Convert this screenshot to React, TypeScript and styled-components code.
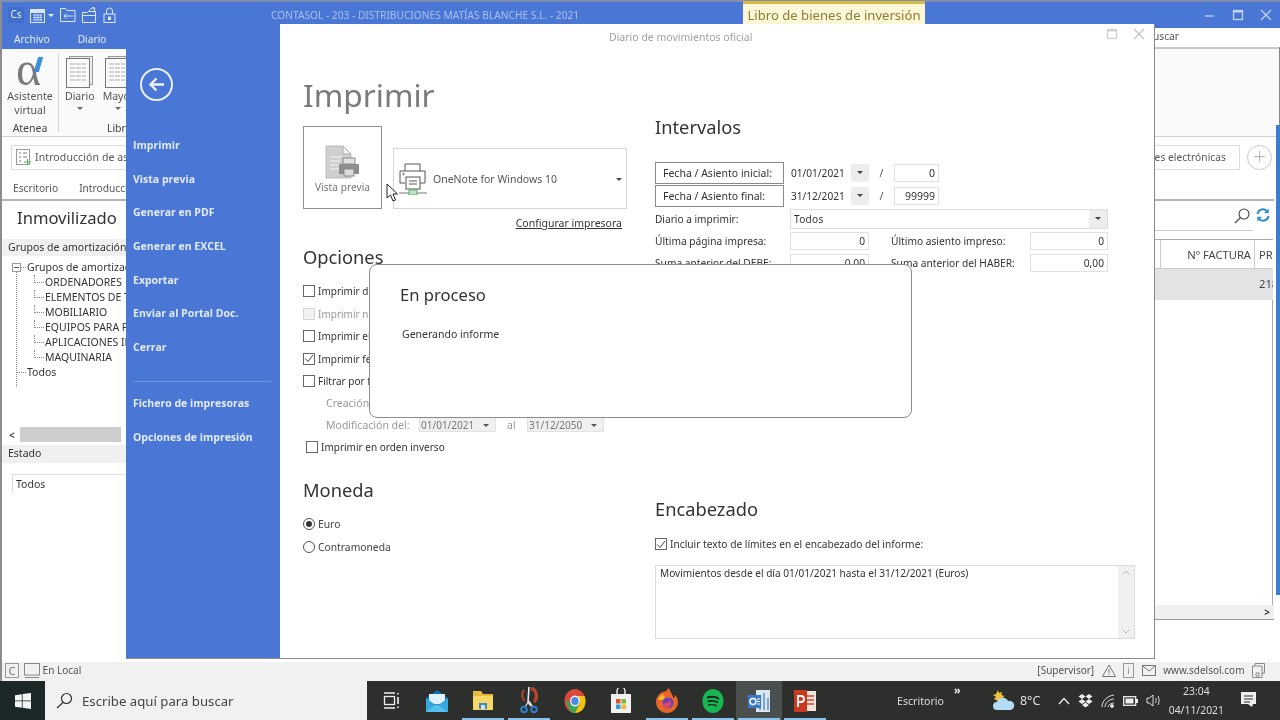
import React from 'react'
import styled, { createGlobalStyle } from 'styled-components'

const BLUE = '#4a76d6'
const FONT = '"Noto Sans", "Open Sans", sans-serif'

const GlobalStyle = createGlobalStyle`
  html, body { margin: 0; padding: 0; background: #fff; }
  body { font-family: ${FONT}; color: #333; }
  * { box-sizing: border-box; }
`

const Screen = styled.div`
  position: relative;
  width: 1280px;
  height: 720px;
  overflow: hidden;
  display: flex;
  flex-direction: column;
  font-size: 10.5px;
  filter: blur(0.35px);
`

/* background application window */
const AppWindow = styled.div`
  height: 681px;
  display: flex;
  flex-direction: column;
  border-left: 2px solid #8d8d8d;
  border-top: 2px solid #7f8fb0;
  background: #fff;
`

const TitleBar = styled.div`
  height: 26px;
  flex: none;
  background: ${BLUE};
  display: flex;
  align-items: center;
  padding-left: 6px;
  color: #fff;
`

const QuickIcons = styled.div`
  display: flex;
  align-items: center;
  gap: 6px;
  width: 263px;
`

const WhiteCaret = styled.div`
  width: 0;
  height: 0;
  margin-left: -4px;
  border-left: 3px solid transparent;
  border-right: 3px solid transparent;
  border-top: 3px solid #e6edfb;
`

const AppTitle = styled.div`
  width: 472px;
  color: #a9c0ee;
  font-size: 10.2px;
  white-space: nowrap;
`

const ContextTab = styled.div`
  width: 182px;
  height: 26px;
  margin-top: -2px;
  border-top: 3px solid #d8bb45;
  background: #fcf7d6;
  color: #8b7c36;
  font-size: 13.1px;
  text-align: center;
  line-height: 22px;
  white-space: nowrap;
`

const WindowControls = styled.div`
  margin-left: auto;
  display: flex;
  align-items: center;
  gap: 12px;
  padding-right: 6px;
`

const TabRow = styled.div`
  height: 21px;
  flex: none;
  display: flex;
  border-bottom: 2px solid #c8c8c8;
`

const BlueTabs = styled.div`
  width: 124px;
  background: ${BLUE};
  display: flex;
  color: #e6edfb;
  margin-bottom: -2px;
  font-size: 10.2px;
  line-height: 22px;
  gap: 28px;
  padding-left: 12px;
`

const SearchHint = styled.div`
  margin-left: auto;
  width: 126px;
  text-indent: -1px;
  font-size: 10.2px;
  line-height: 16px;
  color: #555;
`

const Ribbon = styled.div`
  height: 88px;
  flex: none;
  display: flex;
  background: #fafafa;
  border-bottom: 1px solid #d0d0d0;
`

const RibbonGroup = styled.div<{ $width: number }>`
  width: ${(p) => p.$width}px;
  flex: none;
  padding-top: 7px;
  display: flex;
  flex-direction: column;
  align-items: center;
  text-align: center;
  line-height: 14px;
  color: #555;
`

const RibbonIcons = styled.div`
  display: flex;
  gap: 8px;
  align-self: flex-start;
  padding-left: 6px;
`

const RibbonTool = styled.div`
  display: flex;
  flex-direction: column;
  align-items: center;
  line-height: 14px;
  color: #555;
  white-space: nowrap;
  gap: 1px;
`

const GroupLabel = styled.div`
  margin-top: auto;
  padding-bottom: 1px;
  color: #444;
  white-space: nowrap;
`

const RibbonDivider = styled.div`
  width: 1px;
  height: 78px;
  margin: 5px 0 0 0;
  background: #d4d4d4;
`

const Alpha = styled.div`
  position: relative;
  height: 33px;
  font-family: 'Liberation Serif', serif;
  font-size: 48px;
  line-height: 26px;
  margin-left: -3px;
  color: #7a7a7a;
  &::after {
    content: '';
    position: absolute;
    left: 20px;
    top: 1px;
    width: 5px;
    height: 15px;
    background: #3d8fd9;
    transform: skewX(-16deg);
  }
`

const Caret = styled.div`
  width: 0;
  height: 0;
  border-left: 3px solid transparent;
  border-right: 3px solid transparent;
  border-top: 3px solid #666;
  margin: 3px auto 0;
`

const QuickBar = styled.div`
  height: 40px;
  flex: none;
  padding: 8px 8px 0 9px;
  display: flex;
  align-items: flex-start;
`

const QuickBox = styled.div`
  height: 25px;
  border: 1px solid #dcdcdc;
  width: 200px;
  display: flex;
  align-items: center;
  padding: 0 0 1px 4px;
  gap: 3px;
  color: #555;
  letter-spacing: 0.1px;
  white-space: nowrap;
  overflow: hidden;
  flex: none;
`

const QuickBoxRight = styled(QuickBox)`
  margin-left: auto;
  width: 140px;
  justify-content: flex-end;
  padding-right: 13px;
  font-size: 10.1px;
`

const PlusCircle = styled.div`
  width: 25px;
  height: 25px;
  margin-left: 7px;
  border-radius: 50%;
  border: 1px solid #c9c9c9;
  color: #bbb;
  font-size: 23px;
  line-height: 20px;
  font-weight: 300;
  text-align: center;
  flex: none;
`

const SubTabs = styled.div`
  height: 24px;
  flex: none;
  display: flex;
  gap: 21px;
  padding-left: 11px;
  font-size: 10.2px;
  line-height: 22px;
  color: #555;
  border-bottom: 2px solid #b5b5b5;
  margin-right: 6px;
`

const Workspace = styled.div`
  flex: 1;
  display: flex;
  min-height: 0;
`

const LeftPane = styled.div`
  width: 124px;
  display: flex;
  flex-direction: column;
  overflow: hidden;
  flex: none;
`

const PaneTitle = styled.div`
  height: 38px;
  padding: 2px 0 0 15px;
  font-size: 16.6px;
  line-height: 30px;
  color: #333;
  white-space: nowrap;
`

const GrayHeader = styled.div<{ $height?: number }>`
  height: ${(p) => p.$height ?? 17}px;
  flex: none;
  background: #f0f0f0;
  padding-left: 6px;
  line-height: 16px;
  color: #333;
  white-space: nowrap;
`

const Tree = styled.div`
  position: relative;
  height: 171px;
  padding-top: 4px;
  &::before {
    content: '';
    position: absolute;
    left: 14px;
    top: 16px;
    height: 115px;
    border-left: 1px dotted #888;
  }
`

const TreeRow = styled.div<{ $depth: number }>`
  position: relative;
  height: 15px;
  line-height: 15px;
  padding-left: ${(p) => (p.$depth ? 43 : 25)}px;
  color: #333;
  white-space: nowrap;
  &::before {
    content: '';
    position: absolute;
    top: 7px;
    left: ${(p) => (p.$depth ? 32 : 15)}px;
    width: ${(p) => (p.$depth ? 10 : 9)}px;
    border-top: 1px dotted #888;
  }
  &::after {
    content: '';
    display: ${(p) => (p.$depth ? 'block' : 'none')};
    position: absolute;
    top: 0;
    left: 32px;
    height: 8px;
    border-left: 1px dotted #888;
  }
`

const TreeMinus = styled.span`
  position: absolute;
  left: 10px;
  top: 3px;
  width: 9px;
  height: 9px;
  border: 1px solid #999;
  background: #fff;
  &::after {
    content: '';
    position: absolute;
    left: 1px;
    right: 1px;
    top: 3px;
    border-top: 1px solid #555;
  }
`

const HScroll = styled.div`
  height: 15px;
  margin-bottom: 3px;
  flex: none;
  display: flex;
  align-items: center;
  padding: 0 5px 0 7px;
  gap: 5px;
  font-weight: 700;
  font-size: 10px;
  color: #444;
`

const ScrollThumb = styled.div`
  flex: 1;
  height: 15px;
  background: #cdcdcd;
`

const FilterBox = styled.div`
  margin: 11px 0 0 10px;
  height: 19px;
  border-top: 1px solid #dadada;
  border-left: 1px solid #dadada;
  padding-left: 3px;
  line-height: 18px;
`

const CenterGap = styled.div`
  flex: 1;
`

const RightPane = styled.div`
  width: 126px;
  flex: none;
  display: flex;
  flex-direction: column;
  height: 419px;
  padding-right: 7px;
`

const SearchRow = styled.div`
  height: 38px;
  display: flex;
  justify-content: flex-end;
  align-items: flex-start;
  padding: 7px 3px 0 0;
  gap: 6px;
`

const SearchLine = styled.div`
  height: 1px;
  background: #c9c9c9;
  margin: -9px 20px 8px 0;
`

const DataHeader = styled.div`
  display: grid;
  grid-template-columns: 7px 94px 18px;
  height: 30px;
  border-top: 1px solid #aaa;
  border-bottom: 1px solid #ccc;
  font-size: 11.2px;
  line-height: 29px;
  color: #444;
  white-space: nowrap;
  overflow: hidden;
`

const HeadCell = styled.div`
  text-align: right;
  padding-right: 3px;
  border-right: 1px solid #ccc;
  overflow: hidden;
`

const HeadEnd = styled.div`
  padding-left: 4px;
`

const DataRow = styled.div`
  height: 31px;
  background: #e3e3e3;
  padding-left: 105px;
  line-height: 30px;
  font-size: 11.2px;
  color: #444;
  overflow: hidden;
  white-space: nowrap;
`

const TableBody = styled.div`
  flex: 1;
  border-right: 1px solid #aaa;
`

const TableFoot = styled.div`
  height: 15px;
  background: #f0f0f0;
  border-bottom: 1px solid #999;
  margin-right: -1px;
  text-align: right;
  padding-right: 4px;
  font-size: 10px;
  font-weight: 700;
  line-height: 14px;
  color: #333;
`

const BlueStrip = styled.div`
  position: absolute;
  right: 0;
  top: 125px;
  width: 4px;
  height: 470px;
  background: #3f7bd0;
`

const GrayEdge = styled.div`
  position: absolute;
  right: 0;
  top: 47px;
  width: 1px;
  height: 78px;
  background: #888;
`

const StatusBar = styled.div`
  height: 19px;
  flex: none;
  margin-top: auto;
  background: #f1f1f1;
  display: flex;
  align-items: center;
  padding: 0 0 3px 3px;
  color: #555;
  font-size: 10px;
  white-space: nowrap;
`

const StatusRight = styled.div`
  margin-left: auto;
  display: flex;
  align-items: center;
  gap: 7.5px;
  padding-right: 15px;
`

const LetterBox = styled.div`
  width: 14px;
  height: 15px;
  border: 1px solid #999;
  color: #777;
  font-size: 11px;
  line-height: 13px;
  text-align: center;
  margin-right: 5px;
`

const AppBadge = styled.div`
  width: 16px;
  height: 16px;
  background: #3f6fc8;
  color: #e8f0fd;
  font-size: 10px;
  line-height: 15px;
  text-align: center;
`

/* print dialog, a window lying over the application */
const Dialog = styled.div`
  position: absolute;
  left: 126px;
  top: 24px;
  width: 1029px;
  height: 635px;
  display: flex;
  background: #fff;
  border-right: 1px solid #8a8a8a;
  border-bottom: 1px solid #8a8a8a;
`

const Sidebar = styled.div`
  width: 154px;
  flex: none;
  background: ${BLUE};
  display: flex;
  flex-direction: column;
  padding: 44px 0 0 7px;
`

const BackButton = styled.div`
  width: 33px;
  height: 33px;
  margin: 0 0 34px 7px;
  border: 2px solid #e9effc;
  border-radius: 50%;
  display: flex;
  align-items: center;
  justify-content: center;
`

const SideItem = styled.div`
  height: 33.7px;
  font-family: 'Open Sans', sans-serif;
  font-size: 10.5px;
  font-weight: 700;
  line-height: 20px;
  color: #e3ebfb;
  white-space: nowrap;
`

const SideDivider = styled.div`
  height: 1px;
  width: 138px;
  background: #6b90e0;
  margin: 10px 0 11px;
`

const DialogMain = styled.div`
  flex: 1;
  display: flex;
  flex-direction: column;
`

const DialogBar = styled.div`
  height: 26px;
  flex: none;
  display: flex;
  align-items: center;
  padding: 0 7px 0 329px;
  color: #a0a0a0;
  font-size: 10.5px;
  white-space: nowrap;
`

const DialogControls = styled.div`
  margin-left: auto;
  display: flex;
  align-items: center;
  gap: 11px;
  padding-bottom: 6px;
`

const Columns = styled.div`
  flex: 1;
  display: grid;
  grid-template-columns: 375px 1fr;
`

const LeftColumn = styled.div`
  padding-left: 23px;
  display: flex;
  flex-direction: column;
`

const RightColumn = styled.div`
  display: flex;
  flex-direction: column;
`

const PageTitle = styled.h1`
  margin: 0;
  height: 76px;
  font-size: 31.6px;
  font-weight: 400;
  line-height: 90px;
  color: #7a7a7a;
`

const SectionTitle = styled.h2<{ $height: number; $top?: number }>`
  margin: ${(p) => p.$top ?? 0}px 0 0;
  height: ${(p) => p.$height}px;
  font-size: 18.3px;
  font-weight: 400;
  line-height: 26px;
  color: #333;
`

const PrinterRow = styled.div`
  display: flex;
  align-items: flex-end;
  gap: 11px;
`

const PreviewButton = styled.div`
  width: 79px;
  height: 83px;
  border: 1px solid #8f8f8f;
  display: flex;
  flex-direction: column;
  align-items: center;
  padding-top: 18px;
  gap: 1px;
  color: #777;
  font-size: 10.2px;
  white-space: nowrap;
`

const PrinterSelect = styled.div`
  width: 234px;
  height: 61px;
  border: 1px solid #d6d6d6;
  display: flex;
  align-items: center;
  padding: 0 4px;
  gap: 5px;
  color: #555;
  font-size: 10.5px;
  white-space: nowrap;
`

const PrinterCaret = styled(Caret)`
  margin: 2px 0 0 auto;
  border-top-color: #444;
`

const PrinterLink = styled.div`
  height: 28px;
  padding: 7px 5px 0 0;
  text-align: right;
  width: 324px;
  color: #333;
  text-decoration: underline;
  font-size: 10.5px;
  white-space: nowrap;
`

const CheckRow = styled.div<{ $indent?: number; $disabled?: boolean }>`
  height: 22.5px;
  display: flex;
  align-items: center;
  gap: 3px;
  padding-left: ${(p) => p.$indent ?? 0}px;
  color: ${(p) => (p.$disabled ? '#999' : '#333')};
  font-size: 10px;
  white-space: nowrap;
`

const CheckBox = styled.div<{ $disabled?: boolean }>`
  width: 12px;
  height: 12px;
  flex: none;
  border: 1px solid ${(p) => (p.$disabled ? '#d5d5d5' : '#666')};
  background: ${(p) => (p.$disabled ? '#f2f2f2' : '#fff')};
  display: flex;
  align-items: center;
  justify-content: center;
`

const DateFilterRow = styled.div`
  height: 21.5px;
  display: flex;
  align-items: center;
  padding-left: 23px;
  color: #999;
  white-space: nowrap;
`

const DateLabel = styled.div`
  width: 93px;
`

const DisabledDate = styled.div`
  width: 77px;
  height: 15px;
  flex: none;
  background: #f0f0f0;
  border: 1px solid #e2e2e2;
  display: flex;
  align-items: center;
  padding: 0 6px 0 1px;
  color: #777;
  font-size: 10px;
`

const InlineCaret = styled(Caret)`
  margin: 1px 0 0 auto;
  border-top-color: #555;
`

const AndLabel = styled.div`
  width: 31px;
  padding-left: 11px;
  color: #999;
`

const RadioRow = styled.div`
  height: 22.5px;
  display: flex;
  align-items: center;
  gap: 3px;
  color: #444;
  font-size: 10.3px;
`

const Radio = styled.div<{ $on?: boolean }>`
  width: 12px;
  height: 12px;
  border-radius: 50%;
  border: 1px solid #555;
  display: flex;
  align-items: center;
  justify-content: center;
  &::after {
    content: '';
    width: 6px;
    height: 6px;
    border-radius: 50%;
    background: ${(p) => (p.$on ? '#333' : 'transparent')};
  }
`

const RangeRow = styled.div`
  display: grid;
  grid-template-columns: 129px 85px 25px 45px;
  height: 23px;
  align-items: center;
`

const RangeButton = styled.div`
  width: 129px;
  height: 22px;
  border: 1px solid #8a8a8a;
  padding-left: 7px;
  line-height: 20px;
  color: #333;
  white-space: nowrap;
`

const DateField = styled.div`
  margin-left: 6px;
  width: 79px;
  height: 18px;
  display: flex;
  align-items: center;
  padding-left: 1px;
  font-size: 10.1px;
  color: #333;
`

const DateArrow = styled.div`
  margin-left: auto;
  width: 18px;
  height: 18px;
  background: #ededed;
  display: flex;
  align-items: center;
  justify-content: center;
`

const SmallCaret = styled(Caret)`
  margin: 0;
  border-top-color: #444;
`

const Slash = styled.div`
  text-align: center;
  color: #555;
`

const NumberField = styled.div<{ $width?: number }>`
  width: ${(p) => p.$width ?? 45}px;
  height: 18px;
  border: 1px solid #e0e0e0;
  text-align: right;
  padding-right: 3px;
  line-height: 16px;
  color: #333;
`

const FieldRow = styled.div`
  display: grid;
  grid-template-columns: 135px 101px 139px 78px;
  height: 22px;
  align-items: center;
  color: #333;
  font-size: 10.2px;
  white-space: nowrap;
`

const JournalRow = styled.div`
  display: grid;
  grid-template-columns: 135px 318px;
  height: 23px;
  align-items: center;
  color: #333;
  font-size: 10.1px;
`

const JournalSelect = styled.div`
  height: 20px;
  border: 1px solid #dedede;
  display: flex;
  align-items: center;
  padding-left: 3px;
  letter-spacing: 0.3px;
`

const HeaderCheck = styled(CheckRow)`
  height: 22px;
  margin-bottom: 10px;
  font-size: 10.2px;
`

const MemoBox = styled.div`
  width: 480px;
  height: 74px;
  display: flex;
  border: 1px solid #dcdcdc;
  color: #333;
`

const MemoText = styled.div`
  flex: 1;
  padding: 0 4px;
  line-height: 14px;
  font-size: 10.1px;
`

const MemoScroll = styled.div`
  width: 16px;
  background: #f0f0f0;
  display: flex;
  flex-direction: column;
  justify-content: space-between;
  align-items: center;
  padding: 4px 0;
`

/* progress message over the dialog */
const ProgressBox = styled.div`
  position: absolute;
  left: 369px;
  top: 264px;
  width: 543px;
  height: 154px;
  background: #fff;
  border: 1px solid #8c8c8c;
  border-radius: 8px;
  padding: 16px 0 0 30px;
`

const ProgressTitle = styled.div`
  font-size: 16.6px;
  line-height: 28px;
  color: #333;
`

const ProgressText = styled.div`
  margin: 18px 0 0 2px;
  font-size: 10.5px;
  line-height: 14px;
  color: #333;
`

const Cursor = styled.svg`
  position: absolute;
  left: 386px;
  top: 183px;
`

/* windows taskbar */
const Taskbar = styled.div`
  height: 39px;
  flex: none;
  background: #2c2f2c;
  display: flex;
  align-items: stretch;
  color: #eee;
  white-space: nowrap;
`

const StartButton = styled.div`
  width: 45px;
  background: #1c2727;
  display: flex;
  align-items: center;
  justify-content: center;
`

const SearchField = styled.div`
  width: 322px;
  background: #f1f1f1;
  display: flex;
  align-items: center;
  padding-left: 11px;
  gap: 9px;
  font-size: 13.2px;
  color: #444;
`

const TaskIcons = styled.div`
  display: flex;
  margin-left: 1px;
`

const TaskItem = styled.div<{ $open?: boolean; $active?: boolean }>`
  position: relative;
  width: 46px;
  display: flex;
  align-items: center;
  justify-content: center;
  background: ${(p) => (p.$active ? '#4a4f50' : 'transparent')};
  &::after {
    content: '';
    display: ${(p) => (p.$open ? 'block' : 'none')};
    position: absolute;
    left: 2px;
    right: 2px;
    bottom: 0;
    height: 2px;
    background: #8ac4ee;
  }
`

const TrayArea = styled.div`
  flex: 1;
  display: flex;
  align-items: center;
  font-size: 11.2px;
`

const TrayLabel = styled.div`
  margin-left: 69px;
  color: #ddd;
  font-size: 10.6px;
`

const Chevrons = styled.div`
  margin: -22px 0 0 10px;
  font-size: 11px;
  font-weight: 700;
  width: 39px;
`

const WeatherTemp = styled.div`
  margin: 0 18px 0 5px;
  font-size: 12.5px;
  color: #ddd;
`

const TrayIcons = styled.div`
  display: flex;
  align-items: center;
  gap: 8px;
`

const Clock = styled.div`
  width: 68px;
  margin-left: 1px;
  text-align: center;
  font-size: 10.4px;
  line-height: 19px;
  color: #ddd;
`

const Notify = styled.div`
  margin-left: 10px;
`

const DocIcon = () => (
  <svg width="27" height="32" viewBox="0 0 27 32">
    <rect x="3.5" y="0.5" width="23" height="28" fill="#eee" stroke="#999" />
    <rect x="0.5" y="2.5" width="23" height="29" fill="#fafafa" stroke="#777" />
    {[8, 12, 16, 20, 24].map((y) => (
      <path key={y} d={`M4 ${y}h16`} stroke="#aaa" strokeWidth="1" strokeDasharray="5 1" />
    ))}
  </svg>
)

const CalendarIcon = () => (
  <svg width="16" height="15" viewBox="0 0 16 15" fill="none" stroke="#dbe6fa">
    <rect x="0.5" y="1.5" width="14" height="13" />
    <rect x="0.5" y="1.5" width="14" height="3" fill="#dbe6fa" />
    <path d="M3 7h9M3 9.5h9M3 12h9M5 6v7M8 6v7M11 6v7" strokeWidth="0.8" />
  </svg>
)

const FolderBack = () => (
  <svg width="16" height="14" viewBox="0 0 16 14" fill="none" stroke="#dbe6fa">
    <path d="M.5 13.5V.5h5l1.5 2h8v11z" />
    <path d="M13 8H4M6.5 5.5L4 8l2.5 2.5" />
  </svg>
)

const FolderOpen = () => (
  <svg width="15" height="16" viewBox="0 0 15 16" fill="none" stroke="#dbe6fa">
    <path d="M.5 15.5v-10h5l1-1h7v11zM.5 8.5h13" />
    <path d="M7 4c1-2 3-3 5-3M10 .5l3 .5-1 3" />
  </svg>
)

const LockIcon = () => (
  <svg width="13" height="16" viewBox="0 0 13 16" fill="none" stroke="#dbe6fa">
    <rect x="1" y="7" width="11" height="8.5" />
    <path d="M3.5 7V4a3 3 0 0 1 6 0v3" />
    <rect x="5.5" y="10" width="2" height="2.5" fill="#dbe6fa" />
  </svg>
)

const TaskDocIcon = () => (
  <svg width="16" height="17" viewBox="0 0 16 17" fill="none">
    <rect x="0.5" y="0.5" width="13" height="15" fill="#fff" stroke="#999" />
    <path d="M3 4h2M7 4h4M3 8h2M7 8h4M3 12h2" stroke="#777" />
    <path d="M8 13h7M11.5 10v6" stroke="#4caf50" />
  </svg>
)

const PreviewIcon = () => (
  <svg width="35" height="34" viewBox="0 0 35 34">
    <path d="M1 1h17l8 8v24H1z" fill="#cfcfcf" stroke="#bbb" />
    <path d="M18 1v8h8z" fill="#f0f0f0" stroke="#aaa" />
    <path d="M5 12h12M5 16h10M5 20h10M5 24h10" stroke="#f5f5f5" strokeWidth="1.2" />
    <rect x="18" y="13" width="12" height="6" fill="#e2e2e2" stroke="#888" />
    <rect x="14" y="19" width="20" height="10" fill="#8e8e8e" />
    <rect x="19" y="24" width="10" height="7" fill="#dcdcdc" stroke="#888" />
  </svg>
)

const PrinterIcon = () => (
  <svg width="30" height="32" viewBox="0 0 30 32" fill="none" stroke="#555">
    <path d="M7 8V1h15v7" />
    <path d="M7 20H2V8h25v12h-5" />
    <rect x="8" y="14" width="14" height="12" fill="#fff" />
    <path d="M11 18h8M11 21h8" />
    <circle cx="5.5" cy="11" r="0.7" />
    <path d="M1 30h28" stroke="#777" />
    <rect x="11" y="27" width="8" height="5" fill="#bfe6c4" stroke="#5fae72" />
  </svg>
)

const ArrowBack = () => (
  <svg width="17" height="15" viewBox="0 0 17 15" fill="none" stroke="#f0f4fd" strokeWidth="2.4">
    <path d="M16 7.5H3M8.5 1.5l-6 6 6 6" />
  </svg>
)

const Check = () => (
  <svg width="10" height="9" viewBox="0 0 10 9" fill="none" stroke="#444" strokeWidth="1">
    <path d="M1 4.5l3 3L9 1" />
  </svg>
)

const Magnifier = () => (
  <svg width="16" height="16" viewBox="0 0 16 16" fill="none" stroke="#444" strokeWidth="1.1">
    <circle cx="10" cy="6" r="5" />
    <path d="M6.5 9.5L1 15" />
  </svg>
)

const RefreshIcon = () => (
  <svg width="14" height="14" viewBox="0 0 14 14" fill="none" stroke="#2d8fc9" strokeWidth="2">
    <path d="M1.5 6a5.5 5.5 0 0 1 9.8-2.5M12.5 8a5.5 5.5 0 0 1-9.8 2.5" />
    <path d="M12.5 1v4h-4zM1.5 13V9h4z" fill="#2d8fc9" strokeWidth="0.5" />
  </svg>
)

const ScrollUp = () => (
  <svg width="8" height="5" viewBox="0 0 8 5" fill="none" stroke="#bbb">
    <path d="M.5 4.5L4 1l3.5 3.5" />
  </svg>
)

const ScrollDown = () => (
  <svg width="8" height="5" viewBox="0 0 8 5" fill="none" stroke="#bbb">
    <path d="M.5.5L4 4 7.5.5" />
  </svg>
)

const WarnIcon = () => (
  <svg width="14" height="13" viewBox="0 0 14 13" fill="none" stroke="#777">
    <path d="M7 1l6.5 11.5H.5zM7 5v4M7 10v1" />
  </svg>
)

const InfoBox = () => (
  <svg width="11" height="15" viewBox="0 0 11 15" fill="none" stroke="#999">
    <rect x="0.5" y="0.5" width="10" height="14" />
    <path d="M5.5 6v5M5.5 3.5v1" />
  </svg>
)

const MailIcon = () => (
  <svg width="14" height="11" viewBox="0 0 14 11" fill="none" stroke="#777">
    <rect x="0.5" y="0.5" width="13" height="10" />
    <path d="M1 1l6 5 6-5" />
  </svg>
)

const StackIcon = () => (
  <svg width="13" height="15" viewBox="0 0 13 15" fill="none" stroke="#888">
    <path d="M3 3V.5h9.5V10H10M.5 3h9.5v11.5H.5zM4 10h3v3H4z" />
  </svg>
)

const MonitorIcon = () => (
  <svg width="16" height="15" viewBox="0 0 16 15" fill="none" stroke="#888">
    <rect x="0.5" y="0.5" width="15" height="11.5" />
    <path d="M1 14.5h14" />
  </svg>
)

const WindowsLogo = () => (
  <svg width="16" height="16" viewBox="0 0 16 16" fill="#f5f5f5">
    <path d="M0 2.2l6.8-1v6.3H0zM7.6 1.1L16 0v7.5H7.6zM0 8.3h6.8v6.400L0 13.8zM7.6 8.3H16V16l-8.4-1.2z" />
  </svg>
)

const SearchGlass = () => (
  <svg width="17" height="17" viewBox="0 0 17 17" fill="none" stroke="#333" strokeWidth="1.2">
    <circle cx="10.5" cy="6.5" r="5" />
    <path d="M7 10.5L1 16" />
  </svg>
)

const TaskView = () => (
  <svg width="17" height="17" viewBox="0 0 17 17" fill="none" stroke="#eee" strokeWidth="1.3">
    <path d="M1 1h11M1 16h11" strokeWidth="1.6" />
    <rect x="1.5" y="4.5" width="10" height="8" />
    <path d="M15 1v1.5M15 5v7M15 14.5V16" strokeWidth="1.6" />
  </svg>
)

const MailApp = () => (
  <svg width="24" height="24" viewBox="0 0 24 24">
    <path d="M12 1l11 8v14H1V9z" fill="#0f6fb5" />
    <path d="M4 5h16v10H4z" fill="#dff1fb" />
    <path d="M1 9l11 8 11-8v14H1z" fill="#36a8e0" />
    <path d="M1 23l11-8 11 8z" fill="#55c0ee" />
  </svg>
)

const FolderApp = () => (
  <svg width="22" height="21" viewBox="0 0 22 21">
    <path d="M1 1h8l2 3h10v16H1z" fill="#e8b93a" />
    <path d="M1 6h20v14H1z" fill="#f7d766" />
    <rect x="7" y="13" width="8" height="6" fill="#3f87c4" />
    <rect x="9" y="15" width="4" height="4" fill="#cfe4f3" />
  </svg>
)

const ScissorsApp = () => (
  <svg width="19" height="27" viewBox="0 0 19 27" fill="none">
    <path d="M11 1c6 2 7 10 3 14" stroke="#b5452c" strokeWidth="3.5" />
    <path d="M9 0l-1 15 3 4" stroke="#e8e8e8" strokeWidth="1.6" />
    <path d="M4 3c-3 4-2 9 1 11" stroke="#b5452c" strokeWidth="2" />
    <path d="M9 14l-4 6M9 14l4 6" stroke="#e0e0e0" strokeWidth="1.3" />
    <circle cx="4" cy="22.5" r="2.8" stroke="#2f7dd1" strokeWidth="2" />
    <circle cx="14" cy="22.5" r="2.8" stroke="#2f7dd1" strokeWidth="2" />
  </svg>
)

const ChromeApp = () => (
  <svg width="22" height="24" viewBox="0 0 22 24">
    <ellipse cx="11" cy="12" rx="10.5" ry="12" fill="#d9483b" />
    <path d="M1 10L6 22c1 1 3 2 5 2l5-10H6z" fill="#3aa757" />
    <path d="M11 24c6 0 10.5-5 10.5-12 0-2-.5-3.5-1-5H11l5 7z" fill="#f4c20d" />
    <ellipse cx="11" cy="12" rx="5" ry="5.5" fill="#eee" />
    <ellipse cx="11" cy="12" rx="3.6" ry="4" fill="#4a88e4" />
  </svg>
)

const StoreApp = () => (
  <svg width="22" height="25" viewBox="0 0 22 25">
    <path d="M7 6V3a4 4 0 0 1 8 0v3" fill="none" stroke="#eee" strokeWidth="1.4" />
    <rect x="1" y="6" width="20" height="19" fill="#f0f0ee" />
    <rect x="6" y="11" width="4.5" height="4.5" fill="#e0502f" />
    <rect x="11.5" y="11" width="4.5" height="4.5" fill="#7eb83a" />
    <rect x="6" y="16.5" width="4.5" height="4.5" fill="#2f9ae0" />
    <rect x="11.5" y="16.5" width="4.5" height="4.5" fill="#f2b632" />
  </svg>
)

const FirefoxApp = () => (
  <svg width="22" height="25" viewBox="0 0 22 25">
    <path d="M11 3C5 3 0 8 0 14s5 11 11 11 11-5 11-11c0-3-1-5-3-7 0 2-1 3-2 3 0-4-3-6-4-10-2 1-3 3-2 3z" fill="#e8662a" />
    <path d="M2 12c1-3 3-5 5-6 0 2 1 2 2 3L7 12z" fill="#f5b93a" />
    <circle cx="12" cy="15" r="5.5" fill="#6b3fb5" />
    <path d="M6 15c3 1 6 0 8-3 2 3 1 6-1 8-3 1-6-1-7-5z" fill="#d84a6b" />
  </svg>
)

const SpotifyApp = () => (
  <svg width="22" height="24" viewBox="0 0 22 24" fill="none">
    <ellipse cx="11" cy="12" rx="10.5" ry="12" fill="#18b654" />
    <path d="M5 8.5c4-1 9-1 12 1.5" stroke="#10291a" strokeWidth="2" />
    <path d="M5.5 12.5c3.5-1 7.5-.5 10.5 1" stroke="#10291a" strokeWidth="1.7" />
    <path d="M6 16c3-.7 6-.4 9 1" stroke="#10291a" strokeWidth="1.4" />
  </svg>
)

const ContasolApp = () => (
  <svg width="22" height="22" viewBox="0 0 22 22">
    <rect x="8" y="0" width="14" height="22" fill="#dbe6f2" />
    <path d="M12 6v14M16 3v17M20 8v12" stroke="#7ca6d6" strokeWidth="2" />
    <rect x="0" y="5" width="13" height="13" fill="#3a79c9" />
    <circle cx="5" cy="11.5" r="3" fill="none" stroke="#fff" strokeWidth="1.4" />
    <path d="M9 9h3M9 11.5h3M9 14h3" stroke="#fff" />
  </svg>
)

const PowerPointApp = () => (
  <svg width="22" height="22" viewBox="0 0 22 22">
    <rect x="8" y="1" width="14" height="20" fill="#f0e2dc" />
    <path d="M13 6h7M13 10h7M13 14h7" stroke="#cf4a2c" strokeWidth="1.6" />
    <rect x="0" y="0" width="13" height="22" fill="#c9391f" />
    <path d="M4 17V6h3a2.8 2.8 0 0 1 0 6H4" fill="none" stroke="#fff" strokeWidth="1.8" />
  </svg>
)

const WeatherIcon = () => (
  <svg width="22" height="22" viewBox="0 0 22 22">
    <path d="M5 0l1 3 3-1-.5 3 3 1-2 2 1 3H5L1 9l2-2-3-2 3-1z" fill="#f2c23c" />
    <path d="M4 20a4 4 0 0 1 0-8 6 6 0 0 1 11-1 4.5 4.5 0 0 1 3 9z" fill="#b5dcf5" />
  </svg>
)

const TrayUp = () => (
  <svg width="12" height="8" viewBox="0 0 12 8" fill="none" stroke="#eee" strokeWidth="1.3">
    <path d="M1 7l5-5.5L11 7" />
  </svg>
)

const Dropbox = () => (
  <svg width="15" height="14" viewBox="0 0 15 14" fill="#eee">
    <path d="M4 0l3.5 2.5L4 5 .5 2.5zM11 0l3.5 2.5L11 5 7.5 2.5zM4 5l3.5 2.5L4 10 .5 7.5zM11 5l3.5 2.5L11 10 7.5 7.5zM4 11l3.5-2.5L11 11l-3.5 2.5z" />
  </svg>
)

const WifiIcon = () => (
  <svg width="14" height="14" viewBox="0 0 14 14" fill="none" stroke="#ddd">
    <path d="M1 13c0-6 5-11 12-12M4 13c0-4 4-8 9-8M7 13c0-2 3-4 6-4" />
    <circle cx="11" cy="12" r="1.5" fill="#ddd" />
  </svg>
)

const BatteryIcon = () => (
  <svg width="15" height="10" viewBox="0 0 15 10">
    <rect x="0.7" y="0.7" width="12" height="8.6" fill="none" stroke="#eee" strokeWidth="1.3" />
    <rect x="2.5" y="2.5" width="8" height="5" fill="#eee" />
    <rect x="13" y="3" width="2" height="4" fill="#eee" />
  </svg>
)

const SpeakerIcon = () => (
  <svg width="15" height="15" viewBox="0 0 15 15" fill="none" stroke="#ddd">
    <path d="M1 5h2.5L7 2v11L3.5 10H1z" />
    <path d="M9.5 5c1 1.5 1 3.5 0 5M12 3c1.5 3 1.5 6 0 9" />
  </svg>
)

const NotifyIcon = () => (
  <svg width="17" height="17" viewBox="0 0 17 17">
    <path d="M1 1h15v12h-3l-1 3-4-3H1z" fill="#eee" />
    <path d="M4 5h9M4 8h9M4 11h6" stroke="#2c2f2c" strokeWidth="1.2" />
  </svg>
)

const ControlIcon = ({ kind, color }: { kind: 'min' | 'max' | 'close'; color: string }) => (
  <svg width="16" height="12" viewBox="0 0 16 12" fill="none" stroke={color} strokeWidth="1.3">
    {kind === 'min' && <path d="M3 7h9" />}
    {kind === 'max' && (
      <>
        <rect x="3.5" y="1.5" width="9" height="9" />
        <path d="M3 2.5h10" strokeWidth="2" />
      </>
    )}
    {kind === 'close' && <path d="M3 1l10 10M13 1L3 11" />}
  </svg>
)

const sideTop = ['Imprimir', 'Vista previa', 'Generar en PDF', 'Generar en EXCEL', 'Exportar', 'Enviar al Portal Doc.', 'Cerrar']
const sideBottom = ['Fichero de impresoras', 'Opciones de impresión']
const treeItems = ['ORDENADORES', 'ELEMENTOS DE TRANSPORTE', 'MOBILIARIO', 'EQUIPOS PARA PROCESOS', 'APLICACIONES INFORMÁTICAS', 'MAQUINARIA']

export default function App() {
  return (
    <Screen>
      <GlobalStyle />
      <AppWindow>
        <TitleBar>
          <QuickIcons>
            <AppBadge>Cs</AppBadge>
            <CalendarIcon />
            <WhiteCaret />
            <FolderBack />
            <FolderOpen />
            <LockIcon />
          </QuickIcons>
          <AppTitle>CONTASOL - 203 - DISTRIBUCIONES MATÍAS BLANCHE S.L. - 2021</AppTitle>
          <ContextTab>Libro de bienes de inversión</ContextTab>
          <WindowControls>
            <ControlIcon kind="min" color="#c4d4f3" />
            <ControlIcon kind="max" color="#c4d4f3" />
            <ControlIcon kind="close" color="#c4d4f3" />
          </WindowControls>
        </TitleBar>
        <TabRow>
          <BlueTabs>
            <span>Archivo</span>
            <span>Diario</span>
          </BlueTabs>
          <SearchHint>uscar</SearchHint>
        </TabRow>
        <Ribbon>
          <RibbonGroup $width={56}>
            <Alpha>α</Alpha>
            <span>Asistente</span>
            <span>virtual</span>
            <GroupLabel>Atenea</GroupLabel>
          </RibbonGroup>
          <RibbonDivider />
          <RibbonGroup $width={126}>
            <RibbonIcons>
              <RibbonTool>
                <DocIcon />
                Diario
                <Caret />
              </RibbonTool>
              <RibbonTool>
                <DocIcon />
                Mayor
                <Caret />
              </RibbonTool>
            </RibbonIcons>
            <GroupLabel>Libros</GroupLabel>
          </RibbonGroup>
        </Ribbon>
        <QuickBar>
          <QuickBox>
            <TaskDocIcon />
            Introducción de asientos
          </QuickBox>
          <QuickBoxRight>Notificaciones electrónicas</QuickBoxRight>
          <PlusCircle>+</PlusCircle>
        </QuickBar>
        <SubTabs>
          <span>Escritorio</span>
          <span>Introducción</span>
        </SubTabs>
        <Workspace>
          <LeftPane>
            <PaneTitle>Inmovilizado</PaneTitle>
            <GrayHeader>Grupos de amortización</GrayHeader>
            <Tree>
              <TreeRow $depth={0}>
                <TreeMinus />
                Grupos de amortización
              </TreeRow>
              {treeItems.map((t) => (
                <TreeRow key={t} $depth={1}>
                  {t}
                </TreeRow>
              ))}
              <TreeRow $depth={0}>Todos</TreeRow>
            </Tree>
            <HScroll>
              &lt;
              <ScrollThumb />
            </HScroll>
            <GrayHeader $height={18}>Estado</GrayHeader>
            <FilterBox>Todos</FilterBox>
          </LeftPane>
          <CenterGap />
          <RightPane>
            <SearchRow>
              <Magnifier />
              <RefreshIcon />
            </SearchRow>
            <SearchLine />
            <DataHeader>
              <HeadCell />
              <HeadCell>Nº FACTURA</HeadCell>
              <HeadEnd>PR</HeadEnd>
            </DataHeader>
            <DataRow>218</DataRow>
            <TableBody />
            <TableFoot>&gt;</TableFoot>
          </RightPane>
        </Workspace>
        <StatusBar>
          <LetterBox>C</LetterBox>
          <MonitorIcon />
          &nbsp;En Local
          <StatusRight>
            [Supervisor]
            <WarnIcon />
            <InfoBox />
            <MailIcon />
            www.sdelsol.com
            <StackIcon />
          </StatusRight>
        </StatusBar>
      </AppWindow>
      <GrayEdge />
      <BlueStrip />

      <Dialog>
        <Sidebar>
          <BackButton>
            <ArrowBack />
          </BackButton>
          {sideTop.map((t) => (
            <SideItem key={t}>{t}</SideItem>
          ))}
          <SideDivider />
          {sideBottom.map((t) => (
            <SideItem key={t}>{t}</SideItem>
          ))}
        </Sidebar>
        <DialogMain>
          <DialogBar>
            Diario de movimientos oficial
            <DialogControls>
              <ControlIcon kind="max" color="#d0d0d0" />
              <ControlIcon kind="close" color="#c4c4c4" />
            </DialogControls>
          </DialogBar>
          <Columns>
            <LeftColumn>
              <PageTitle>Imprimir</PageTitle>
              <PrinterRow>
                <PreviewButton>
                  <PreviewIcon />
                  Vista previa
                </PreviewButton>
                <PrinterSelect>
                  <PrinterIcon />
                  OneNote for Windows 10
                  <PrinterCaret />
                </PrinterSelect>
              </PrinterRow>
              <PrinterLink>Configurar impresora</PrinterLink>
              <SectionTitle $height={36} $top={7}>
                Opciones
              </SectionTitle>
              <CheckRow>
                <CheckBox />
                Imprimir detalle
              </CheckRow>
              <CheckRow $disabled>
                <CheckBox $disabled />
                Imprimir nombre
              </CheckRow>
              <CheckRow>
                <CheckBox />
                Imprimir el saldo
              </CheckRow>
              <CheckRow>
                <CheckBox>
                  <Check />
                </CheckBox>
                Imprimir fecha
              </CheckRow>
              <CheckRow>
                <CheckBox />
                Filtrar por fecha
              </CheckRow>
              <DateFilterRow>
                <DateLabel>Creación del:</DateLabel>
              </DateFilterRow>
              <DateFilterRow>
                <DateLabel>Modificación del:</DateLabel>
                <DisabledDate>
                  01/01/2021
                  <InlineCaret />
                </DisabledDate>
                <AndLabel>al</AndLabel>
                <DisabledDate>
                  31/12/2050
                  <InlineCaret />
                </DisabledDate>
              </DateFilterRow>
              <CheckRow $indent={3}>
                <CheckBox />
                Imprimir en orden inverso
              </CheckRow>
              <SectionTitle $height={36} $top={19}>
                Moneda
              </SectionTitle>
              <RadioRow>
                <Radio $on />
                Euro
              </RadioRow>
              <RadioRow>
                <Radio />
                Contramoneda
              </RadioRow>
            </LeftColumn>
            <RightColumn>
              <SectionTitle $height={47} $top={64}>
                Intervalos
              </SectionTitle>
              <RangeRow>
                <RangeButton>Fecha / Asiento inicial:</RangeButton>
                <DateField>
                  01/01/2021
                  <DateArrow>
                    <SmallCaret />
                  </DateArrow>
                </DateField>
                <Slash>/</Slash>
                <NumberField>0</NumberField>
              </RangeRow>
              <RangeRow>
                <RangeButton>Fecha / Asiento final:</RangeButton>
                <DateField>
                  31/12/2021
                  <DateArrow>
                    <SmallCaret />
                  </DateArrow>
                </DateField>
                <Slash>/</Slash>
                <NumberField>99999</NumberField>
              </RangeRow>
              <JournalRow>
                Diario a imprimir:
                <JournalSelect>
                  Todos
                  <DateArrow>
                    <SmallCaret />
                  </DateArrow>
                </JournalSelect>
              </JournalRow>
              <FieldRow>
                Última página impresa:
                <NumberField $width={79}>0</NumberField>
                Último asiento impreso:
                <NumberField $width={78}>0</NumberField>
              </FieldRow>
              <FieldRow>
                Suma anterior del DEBE:
                <NumberField $width={79}>0,00</NumberField>
                Suma anterior del HABER:
                <NumberField $width={78}>0,00</NumberField>
              </FieldRow>
              <SectionTitle $height={37} $top={222}>
                Encabezado
              </SectionTitle>
              <HeaderCheck>
                <CheckBox>
                  <Check />
                </CheckBox>
                Incluir texto de límites en el encabezado del informe:
              </HeaderCheck>
              <MemoBox>
                <MemoText>Movimientos desde el día 01/01/2021 hasta el 31/12/2021 (Euros)</MemoText>
                <MemoScroll>
                  <ScrollUp />
                  <ScrollDown />
                </MemoScroll>
              </MemoBox>
            </RightColumn>
          </Columns>
        </DialogMain>
      </Dialog>

      <ProgressBox>
        <ProgressTitle>En proceso</ProgressTitle>
        <ProgressText>Generando informe</ProgressText>
      </ProgressBox>

      <Cursor width="12" height="19" viewBox="0 0 12 19">
        <path d="M1 1v14l3.5-3 2.5 6 2.5-1-2.5-6h4.5z" fill="#fff" stroke="#222" />
      </Cursor>

      <Taskbar>
        <StartButton>
          <WindowsLogo />
        </StartButton>
        <SearchField>
          <SearchGlass />
          Escribe aquí para buscar
        </SearchField>
        <TaskIcons>
          <TaskItem>
            <TaskView />
          </TaskItem>
          <TaskItem>
            <MailApp />
          </TaskItem>
          <TaskItem $open>
            <FolderApp />
          </TaskItem>
          <TaskItem $open>
            <ScissorsApp />
          </TaskItem>
          <TaskItem>
            <ChromeApp />
          </TaskItem>
          <TaskItem>
            <StoreApp />
          </TaskItem>
          <TaskItem $open>
            <FirefoxApp />
          </TaskItem>
          <TaskItem $open>
            <SpotifyApp />
          </TaskItem>
          <TaskItem $open $active>
            <ContasolApp />
          </TaskItem>
          <TaskItem $open>
            <PowerPointApp />
          </TaskItem>
        </TaskIcons>
        <TrayArea>
          <TrayLabel>Escritorio</TrayLabel>
          <Chevrons>»</Chevrons>
          <WeatherIcon />
          <WeatherTemp>8°C</WeatherTemp>
          <TrayIcons>
            <TrayUp />
            <Dropbox />
            <WifiIcon />
            <BatteryIcon />
            <SpeakerIcon />
          </TrayIcons>
          <Clock>
            23:04
            <br />
            04/11/2021
          </Clock>
          <Notify>
            <NotifyIcon />
          </Notify>
        </TrayArea>
      </Taskbar>
    </Screen>
  )
}
